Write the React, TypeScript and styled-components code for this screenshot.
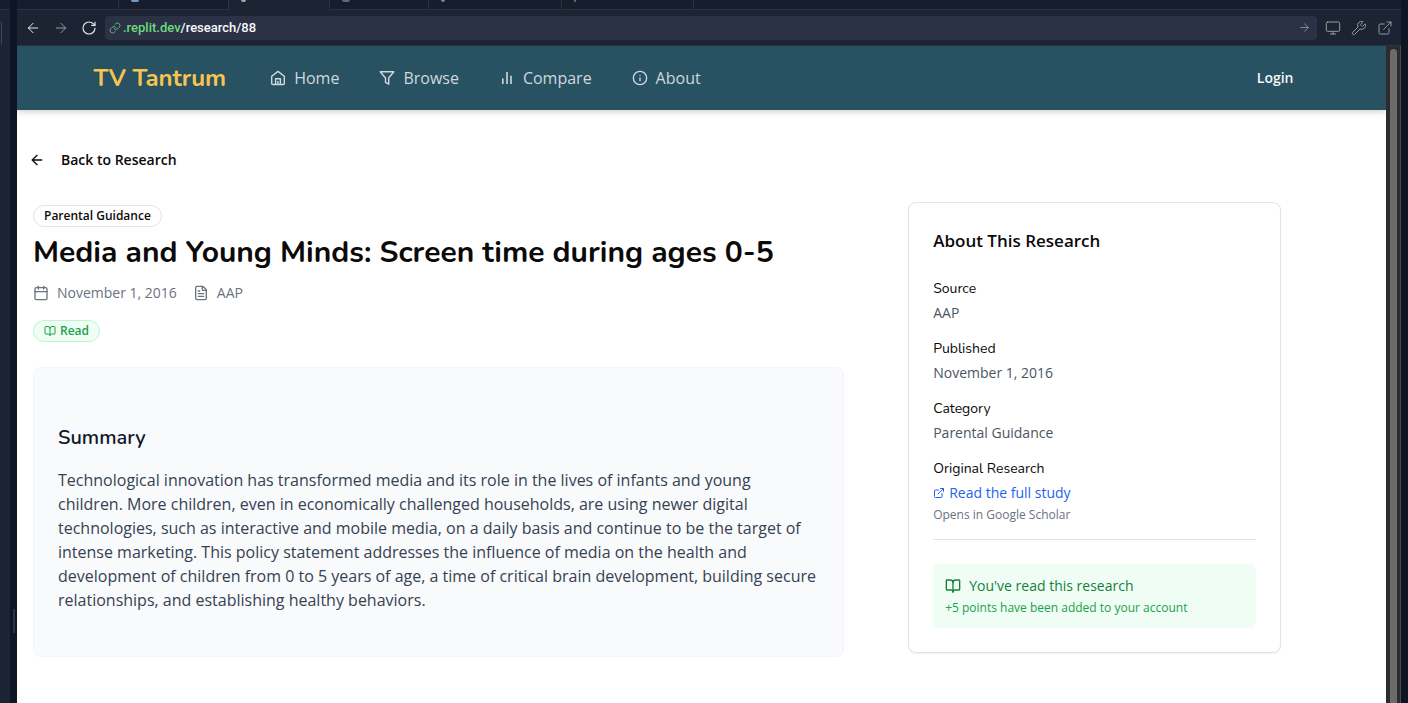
import React from "react";
import styled, { createGlobalStyle } from "styled-components";
import {
  ArrowLeft, ArrowRight, BookOpen, Calendar, ExternalLink, FileText, Info, Link, Monitor, RotateCw, Wrench,
} from "lucide-react";

const Global = createGlobalStyle`
  *, *::before, *::after { box-sizing: border-box; }
  body { margin: 0; background: #0e1525; font-family: "Open Sans", sans-serif; color: #0c0a09; }
  h1, h2, h3, p, dl, dt, dd { margin: 0; }
  button, input { font: inherit; }
  a { text-decoration: none; }
  svg { flex: none; display: block; }
`;

const headingFont = `Nunito, Lato, "Open Sans", sans-serif`;

const Workspace = styled.div`
  display: grid;
  grid-template-columns: 10px 7px minmax(0, 1fr) 7px;
  min-height: 100vh;
  background: #0e1525;
`;
const SidePane = styled.aside`
  background: #1c2333;
  border-top: 9px solid #171d2d;
`;
const SidePaneEdge = styled.div`
  height: 36px;
  padding-top: 11px;
  border-top: 1px solid #2b3245;
`;
const SideField = styled.div`
  width: 2px;
  height: 24px;
  border-right: 1px solid #3c445c;
  border-radius: 0 4px 4px 0;
`;
const Gutter = styled.div`
  display: flex;
  justify-content: flex-end;
  align-items: flex-start;
  padding: 609px 2px 0 0;
`;
const Grip = styled.div`
  width: 2px;
  height: 24px;
  background: #2b3245;
`;
const Pane = styled.div`
  display: flex;
  flex-direction: column;
  min-width: 0;
`;
const Tabs = styled.div`
  display: flex;
  height: 10px;
  background: #171d2d;
`;
const Tab = styled.div<{ $w: number; $active?: boolean }>`
  width: ${(p) => p.$w}px;
  padding-left: 12px;
  border-right: 1px solid #2b3245;
  border-bottom: 1px solid ${(p) => (p.$active ? "#1c2333" : "#2b3245")};
  background: ${(p) => (p.$active ? "#1c2333" : "#171d2d")};
`;
const TabRest = styled.div`
  flex: 1;
  border-bottom: 1px solid #2b3245;
`;
const TabIcon = styled.div<{ $w: number; $c: string }>`
  width: ${(p) => p.$w}px;
  height: 2px;
  background: ${(p) => p.$c};
  border-radius: 0 0 4px 4px;
`;
const Toolbar = styled.div`
  display: flex;
  align-items: center;
  height: 36px;
  padding: 0 8px;
  gap: 12px;
  background: #1c2333;
  border-bottom: 1px solid #2b3245;
`;
const IconButton = styled.button<{ $dim?: boolean }>`
  display: flex;
  padding: 0;
  border: 0;
  background: none;
  color: ${(p) => (p.$dim ? "#969aa5" : "#e6e8ec")};
`;
const AddressBar = styled.div`
  display: flex;
  align-items: center;
  flex: 1;
  height: 24px;
  margin-left: -4px;
  padding: 0 6px 0 4px;
  gap: 2px;
  border-radius: 4px;
  background: #2b3245;
  color: #f5f9fc;
  font: 500 13px/24px Roboto, sans-serif;
`;
const Address = styled.div`
  flex: 1;
`;
const Host = styled.span`
  color: #6cd97e;
`;
const ToolGroup = styled.div`
  display: flex;
  gap: 10px;
  margin-left: -4px;
`;
const Viewport = styled.div`
  display: flex;
  flex: 1;
  background: #fff;
`;
const Site = styled.div`
  flex: 1;
  min-width: 0;
`;
const Scrollbar = styled.div`
  width: 15px;
  padding: 3px 3px 0 4px;
  background: #2c2c2c;
  border-right: 1px solid #4a4a4a;
`;
const Thumb = styled.div`
  height: 100%;
  border-radius: 4px 4px 0 0;
  background: #6b6b6b;
`;
const Header = styled.header`
  background: #285161;
  box-shadow: 0 2px 6px rgba(0, 0, 0, 0.18);
`;
const HeaderInner = styled.div`
  display: flex;
  align-items: center;
  max-width: 1280px;
  height: 64px;
  margin: 0 auto;
  padding: 0 32px;
`;
const Brand = styled.a`
  color: #f6c453;
  font: 700 24px/32px ${headingFont};
`;
const Nav = styled.nav`
  display: flex;
  gap: 40px;
  margin-left: 44px;
`;
const NavLink = styled.a`
  display: flex;
  align-items: center;
  gap: 8px;
  color: #ced9dd;
  font-size: 16px;
  line-height: 24px;
`;
const Login = styled.button`
  margin-left: auto;
  padding: 0 16px;
  border: 0;
  background: none;
  color: #f4f7f8;
  font-size: 14px;
  font-weight: 600;
  line-height: 20px;
`;
const Main = styled.main`
  max-width: 1280px;
  padding: 32px 16px;
`;
const Back = styled.button`
  display: flex;
  align-items: center;
  gap: 16px;
  height: 36px;
  margin-left: -16px;
  padding: 0 12px;
  border: 0;
  background: none;
  color: #0c0a09;
  font-size: 14px;
  font-weight: 600;
  line-height: 20px;
`;
const Columns = styled.div`
  display: grid;
  grid-template-columns: 65% minmax(0, 1fr);
  align-items: start;
  gap: 64px;
  margin-top: 24px;
`;
const Article = styled.article`
  display: flex;
  flex-direction: column;
  align-items: flex-start;
  padding-top: 3px;
`;
const Badge = styled.span<{ $green?: boolean }>`
  display: flex;
  align-items: center;
  gap: 4px;
  height: 22px;
  padding: 0 10px;
  border: 1px solid ${(p) => (p.$green ? "#bbf7d0" : "#e4e4e7")};
  border-radius: 11px;
  background: ${(p) => (p.$green ? "#f0fdf4" : "#fff")};
  color: ${(p) => (p.$green ? "#16a34a" : "#0c0a09")};
  font-size: 12px;
  font-weight: 600;
  line-height: 16px;
`;
const Title = styled.h1`
  margin: 8px 0 12px;
  font: 700 30px/36px ${headingFont};
`;
const Meta = styled.div`
  display: flex;
  gap: 16px;
  margin-bottom: 17px;
  color: #6b7280;
  font-size: 14px;
  line-height: 20px;
`;
const MetaItem = styled.span`
  display: flex;
  align-items: center;
  gap: 8px;
`;
const SummaryCard = styled.section`
  align-self: stretch;
  margin-top: 25px;
  padding: 56px 24px 44px;
  border: 1px solid #f1f5f9;
  border-radius: 8px;
  background: #f8fafc;
`;
const SummaryTitle = styled.h2`
  margin-bottom: 16px;
  font: 600 20px/28px ${headingFont};
  color: #0f172a;
`;
const SummaryText = styled.p`
  font-size: 16px;
  line-height: 24px;
  color: #374151;
`;
const InfoCard = styled.aside`
  padding: 24px;
  border: 1px solid #e4e4e7;
  border-radius: 8px;
  background: #fff;
  box-shadow: 0 1px 2px rgba(0, 0, 0, 0.06);
`;
const InfoTitle = styled.h2`
  font-size: 17px;
  font-weight: 600;
  line-height: 28px;
`;
const Facts = styled.dl`
  display: grid;
  gap: 15px;
  margin-top: 23px;
  font-size: 14px;
  line-height: 20px;
`;
const Fact = styled.div`
  display: grid;
  gap: 3px;
`;
const FactName = styled.dt`
  font-family: ${headingFont};
  line-height: 22px;
`;
const FactValue = styled.dd`
  color: #4b5563;
`;
const StudyLink = styled.a`
  display: flex;
  align-items: center;
  gap: 4px;
  color: #2563eb;
`;
const Note = styled.p`
  margin-top: 4px;
  color: #6b7280;
  font-size: 12px;
  line-height: 16px;
`;
const Rule = styled.hr`
  height: 1px;
  margin: 16px 0 24px;
  border: 0;
  background: #e4e4e7;
`;
const Notice = styled.div`
  padding: 12px;
  border-radius: 6px;
  background: #f0fdf4;
  color: #15803d;
  font-size: 14px;
  line-height: 20px;
`;
const NoticeHead = styled.div`
  display: flex;
  align-items: center;
  gap: 8px;
`;
const NoticeNote = styled(Note)`
  color: #16a34a;
`;

const HomeIcon = () => (
  <svg width="16" height="16" viewBox="0 0 16 16" fill="none" stroke="currentColor" strokeWidth="1.4" strokeLinejoin="round">
    <path d="M1.7 6.2 8 1.4l6.3 4.8v7.2c0 .7-.5 1.1-1.1 1.1H2.8c-.6 0-1.1-.4-1.1-1.1z" />
    <path d="M5.6 14.4V8.7h4.8v5.7M8 11v3.4" />
  </svg>
);
const FunnelIcon = () => (
  <svg width="16" height="16" viewBox="0 0 16 16" fill="none" stroke="currentColor" strokeWidth="1.4" strokeLinejoin="round">
    <path d="M1.2 1.8h13.6L9.7 8v6.2L6.5 12.4V8z" />
  </svg>
);
const BarsIcon = () => (
  <svg width="16" height="16" viewBox="0 0 16 16" fill="none" stroke="currentColor" strokeWidth="1.6">
    <path d="M3.8 8.5V14M8 2v12M12 5.8V14" />
  </svg>
);

const facts = [
  ["Source", "AAP"],
  ["Published", "November 1, 2016"],
  ["Category", "Parental Guidance"],
];

export default function App() {
  return (
    <>
      <Global />
      <Workspace>
        <SidePane>
          <SidePaneEdge><SideField /></SidePaneEdge>
        </SidePane>
        <Gutter><Grip /></Gutter>
        <Pane>
          <Tabs>
            <Tab $w={102} />
            <Tab $w={110}><TabIcon $w={8} $c="#6f9cc4" /></Tab>
            <Tab $w={101} $active><TabIcon $w={5} $c="#a0a4ae" /></Tab>
            <Tab $w={99}><TabIcon $w={8} $c="#5f6675" /></Tab>
            <Tab $w={133}><TabIcon $w={4} $c="#7d8390" /></Tab>
            <Tab $w={132}><TabIcon $w={2} $c="#3f8a5a" /></Tab>
            <TabRest />
          </Tabs>
          <Toolbar>
            <IconButton aria-label="Back"><ArrowLeft size={16} strokeWidth={1.5} /></IconButton>
            <IconButton aria-label="Forward" $dim><ArrowRight size={16} strokeWidth={1.5} /></IconButton>
            <IconButton aria-label="Reload"><RotateCw size={16} strokeWidth={1.7} /></IconButton>
            <AddressBar>
              <Link size={12} color="#5fb873" />
              <Address><Host>.replit.dev</Host>/research/88</Address>
              <IconButton aria-label="Go" $dim><ArrowRight size={13} strokeWidth={1.5} /></IconButton>
            </AddressBar>
            <ToolGroup>
              <IconButton aria-label="Device" $dim><Monitor size={16} strokeWidth={1.5} /></IconButton>
              <IconButton aria-label="Developer tools" $dim><Wrench size={16} strokeWidth={1.5} /></IconButton>
              <IconButton aria-label="Open in new tab" $dim><ExternalLink size={16} strokeWidth={1.5} /></IconButton>
            </ToolGroup>
          </Toolbar>
          <Viewport>
            <Site>
              <Header>
                <HeaderInner>
                  <Brand href="#">TV Tantrum</Brand>
                  <Nav>
                    <NavLink href="#"><HomeIcon />Home</NavLink>
                    <NavLink href="#"><FunnelIcon />Browse</NavLink>
                    <NavLink href="#"><BarsIcon />Compare</NavLink>
                    <NavLink href="#"><Info size={16} strokeWidth={2} />About</NavLink>
                  </Nav>
                  <Login>Login</Login>
                </HeaderInner>
              </Header>
              <Main>
                <Back><ArrowLeft size={16} />Back to Research</Back>
                <Columns>
                  <Article>
                    <Badge>Parental Guidance</Badge>
                    <Title>Media and Young Minds: Screen time during ages 0-5</Title>
                    <Meta>
                      <MetaItem><Calendar size={16} />November 1, 2016</MetaItem>
                      <MetaItem><FileText size={16} />AAP</MetaItem>
                    </Meta>
                    <Badge $green><BookOpen size={12} />Read</Badge>
                    <SummaryCard>
                      <SummaryTitle>Summary</SummaryTitle>
                      <SummaryText>
                        Technological innovation has transformed media and its role in the lives of infants and young
                        children. More children, even in economically challenged households, are using newer digital
                        technologies, such as interactive and mobile media, on a daily basis and continue to be the
                        target of intense marketing. This policy statement addresses the influence of media on the
                        health and development of children from 0 to 5 years of age, a time of critical brain
                        development, building secure relationships, and establishing healthy behaviors.
                      </SummaryText>
                    </SummaryCard>
                  </Article>
                  <InfoCard>
                    <InfoTitle>About This Research</InfoTitle>
                    <Facts>
                      {facts.map(([name, value]) => (
                        <Fact key={name}>
                          <FactName>{name}</FactName>
                          <FactValue>{value}</FactValue>
                        </Fact>
                      ))}
                      <Fact>
                        <FactName>Original Research</FactName>
                        <FactValue>
                          <StudyLink href="#"><ExternalLink size={12} />Read the full study</StudyLink>
                          <Note>Opens in Google Scholar</Note>
                        </FactValue>
                      </Fact>
                    </Facts>
                    <Rule />
                    <Notice>
                      <NoticeHead><BookOpen size={16} />You've read this research</NoticeHead>
                      <NoticeNote>+5 points have been added to your account</NoticeNote>
                    </Notice>
                  </InfoCard>
                </Columns>
              </Main>
            </Site>
            <Scrollbar><Thumb /></Scrollbar>
          </Viewport>
        </Pane>
      </Workspace>
    </>
  );
}
